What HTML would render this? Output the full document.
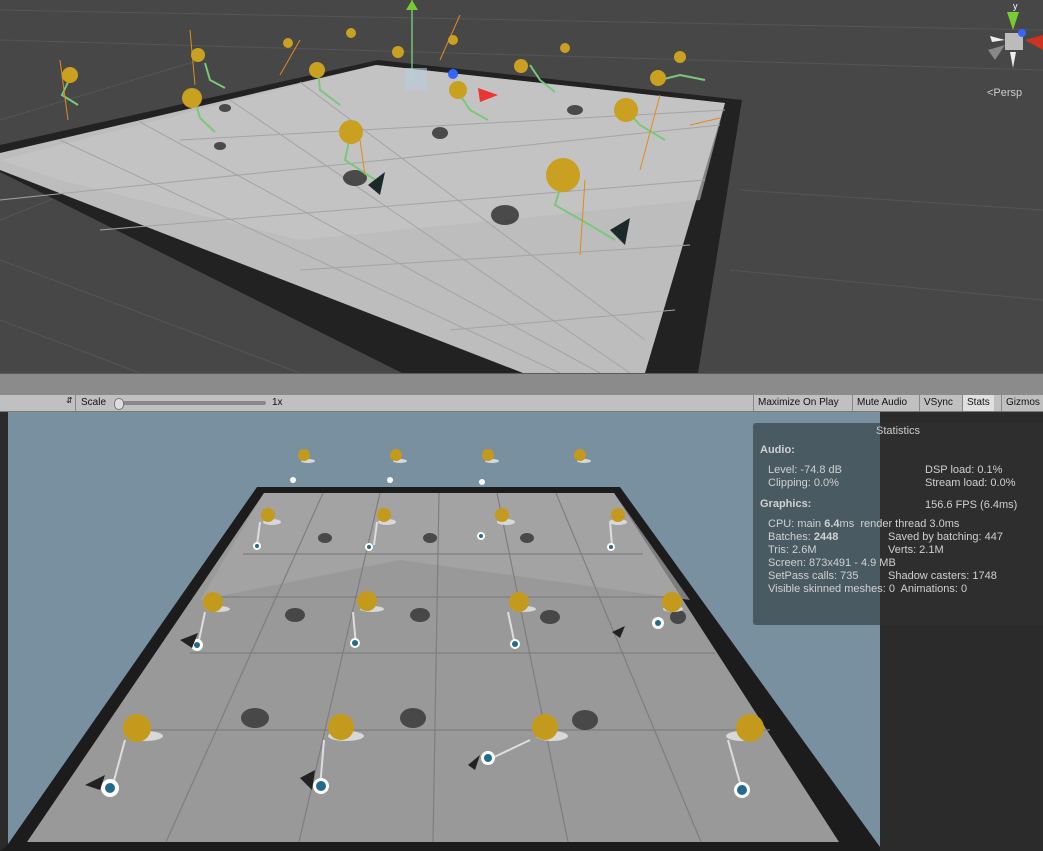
<!DOCTYPE html>
<html><head><meta charset="utf-8"><style>
html,body{margin:0;padding:0;width:1043px;height:851px;overflow:hidden;background:#474747;font-family:"Liberation Sans",sans-serif}
.abs{position:absolute}
#bar1{left:0;top:373px;width:1043px;height:22px;background:#8b8b8b;border-top:1px solid #5a5a5a}
#bar2{left:0;top:395px;width:1043px;height:16px;background:#c0c0c0;border-bottom:1px solid #7a7a7a;font-size:10px;color:#111}
.btn{position:absolute;top:0;height:16px;line-height:16px;border-left:1px solid #888;padding:0 4px;font-size:10px}
#stats{left:753px;top:423px;width:290px;height:202px;font-size:11px;color:#d0d0d0}
#stats div{position:absolute;white-space:nowrap}
</style></head><body>
<svg class="abs" style="left:0;top:0" width="1043" height="851">
<rect x="0" y="0" width="1043" height="373" fill="#474747"/>
<g stroke="#555" stroke-width="1">
<line x1="0" y1="40" x2="1043" y2="70"/><line x1="0" y1="10" x2="1043" y2="30"/>
<line x1="0" y1="260" x2="300" y2="373"/><line x1="0" y1="320" x2="140" y2="373"/>
<line x1="740" y1="190" x2="1043" y2="210"/><line x1="730" y1="270" x2="1043" y2="300"/>
<line x1="0" y1="220" x2="150" y2="160"/><line x1="0" y1="120" x2="200" y2="60"/>
</g>
<polygon points="0,145 378,60 742,100 698,373 402,373 0,172" fill="#222"/>
<polygon points="0,153 376,65 725,103 645,373 523,373 0,170" fill="#bdbdbd"/>
<polygon points="376,65 725,103 700,200 300,240 60,180 0,160" fill="#c6c6c6" opacity=".6"/>
<g stroke="#a4a4a4" stroke-width="1">
<line x1="60" y1="140" x2="560" y2="373"/><line x1="140" y1="122" x2="600" y2="373"/>
<line x1="230" y1="100" x2="630" y2="373"/><line x1="300" y1="82" x2="645" y2="340"/>
<line x1="0" y1="200" x2="720" y2="125"/><line x1="100" y1="230" x2="705" y2="180"/>
<line x1="300" y1="270" x2="690" y2="245"/><line x1="450" y1="330" x2="675" y2="310"/>
<line x1="180" y1="140" x2="725" y2="110"/>
</g>
<g fill="#222" opacity=".75">
<ellipse cx="355" cy="178" rx="12" ry="8"/><ellipse cx="505" cy="215" rx="14" ry="10"/>
<ellipse cx="440" cy="133" rx="8" ry="6"/><ellipse cx="225" cy="108" rx="6" ry="4"/>
<ellipse cx="575" cy="110" rx="8" ry="5"/><ellipse cx="220" cy="146" rx="6" ry="4"/>
</g>
<g stroke="#7ac87a" stroke-width="2" fill="none">
<polyline points="70,78 62,95 78,105"/><polyline points="195,100 200,118 215,132"/>
<polyline points="350,137 345,160 380,183"/><polyline points="563,178 555,205 590,225 615,240"/>
<polyline points="458,92 470,110 488,120"/><polyline points="628,112 640,125 665,140"/>
<polyline points="660,80 680,75 705,80"/><polyline points="205,63 210,80 225,88"/>
<polyline points="318,72 320,90 340,105"/><polyline points="530,65 540,80 555,92"/>
</g>
<g stroke="#e08a20" stroke-width="1">
<line x1="60" y1="60" x2="68" y2="120"/><line x1="190" y1="30" x2="195" y2="85"/>
<line x1="460" y1="15" x2="440" y2="60"/><line x1="580" y1="255" x2="585" y2="180"/>
<line x1="640" y1="170" x2="660" y2="95"/><line x1="360" y1="140" x2="365" y2="175"/>
<line x1="280" y1="75" x2="300" y2="40"/><line x1="690" y1="125" x2="720" y2="118"/>
</g>
<line x1="412" y1="0" x2="412" y2="80" stroke="#8f8" stroke-width="1"/>
<polygon points="406,10 418,10 412,0" fill="#7c3"/>
<rect x="405" y="68" width="22" height="22" fill="#bcd" opacity=".6"/>
<polygon points="478,88 498,95 480,102" fill="#e33"/>
<circle cx="453" cy="74" r="5" fill="#36f"/>
<g>
<circle cx="70" cy="75" r="8" fill="#c9a020"/><circle cx="198" cy="55" r="7" fill="#c9a020"/>
<circle cx="192" cy="98" r="10" fill="#c9a020"/><circle cx="288" cy="43" r="5" fill="#c9a020"/>
<circle cx="317" cy="70" r="8" fill="#c9a020"/><circle cx="351" cy="33" r="5" fill="#c9a020"/>
<circle cx="398" cy="52" r="6" fill="#c9a020"/><circle cx="453" cy="40" r="5" fill="#c9a020"/>
<circle cx="458" cy="90" r="9" fill="#c9a020"/><circle cx="521" cy="66" r="7" fill="#c9a020"/>
<circle cx="565" cy="48" r="5" fill="#c9a020"/><circle cx="658" cy="78" r="8" fill="#c9a020"/>
<circle cx="680" cy="57" r="6" fill="#c9a020"/><circle cx="626" cy="110" r="12" fill="#c9a020"/>
<circle cx="351" cy="132" r="12" fill="#c9a020"/><circle cx="563" cy="175" r="17" fill="#c9a020"/>
</g>
<polygon points="610,230 630,218 625,245" fill="#1a2a2a"/><polygon points="368,185 385,172 380,195" fill="#1a2a2a"/>
<!-- gizmo -->
<polygon points="1007,12 1019,12 1013,30" fill="#7c3"/>
<rect x="1005" y="33" width="18" height="17" fill="#bbb"/>
<circle cx="1022" cy="33" r="4" fill="#36f"/>
<polygon points="1025,40 1043,35 1043,50" fill="#c32"/>
<polygon points="990,36 1005,40 992,42" fill="#eee"/>
<polygon points="988,50 1005,45 995,60" fill="#888"/>
<polygon points="1010,52 1016,52 1013,68" fill="#eee"/>
<text x="1013" y="9" fill="#fff" font-size="9" font-family="Liberation Sans">y</text>
<text x="987" y="96" fill="#ccc" font-size="11" font-family="Liberation Sans">&lt;Persp</text>

<!-- game view -->
<rect x="0" y="411" width="8" height="440" fill="#2b2b2b"/>
<rect x="8" y="411" width="872" height="440" fill="#7890a0"/>
<rect x="880" y="411" width="163" height="440" fill="#2b2b2b"/>
<polygon points="257,487 620,487 880,847 880,851 0,851 6,847" fill="#1c1c1c"/>
<polygon points="264,493 614,493 839,842 27,842" fill="#999"/>
<polygon points="264,493 614,493 690,600 400,560 200,600" fill="#a6a6a6" opacity=".7"/>
<g stroke="#7e7e7e" stroke-width="1.2">
<line x1="323" y1="493" x2="166" y2="842"/><line x1="380" y1="493" x2="299" y2="842"/>
<line x1="439" y1="493" x2="433" y2="842"/><line x1="497" y1="493" x2="568" y2="842"/>
<line x1="556" y1="493" x2="701" y2="842"/>
<line x1="243" y1="554" x2="643" y2="554"/><line x1="220" y1="597" x2="674" y2="597"/>
<line x1="190" y1="653" x2="715" y2="653"/><line x1="140" y1="730" x2="770" y2="730"/>
</g>
<g fill="#333" opacity=".8">
<ellipse cx="325" cy="538" rx="7" ry="5"/><ellipse cx="430" cy="538" rx="7" ry="5"/><ellipse cx="527" cy="538" rx="7" ry="5"/>
<ellipse cx="295" cy="615" rx="10" ry="7"/><ellipse cx="420" cy="615" rx="10" ry="7"/><ellipse cx="550" cy="617" rx="10" ry="7"/><ellipse cx="678" cy="617" rx="8" ry="7"/>
<ellipse cx="255" cy="718" rx="14" ry="10"/><ellipse cx="413" cy="718" rx="13" ry="10"/><ellipse cx="585" cy="720" rx="13" ry="10"/>
</g>
<g stroke="#ddd" stroke-width="2" fill="none">
<line x1="260" y1="522" x2="257" y2="545"/><line x1="377" y1="522" x2="374" y2="545"/><line x1="610" y1="522" x2="612" y2="545"/>
<line x1="205" y1="612" x2="198" y2="645"/><line x1="353" y1="612" x2="356" y2="645"/><line x1="508" y1="612" x2="515" y2="645"/>
<line x1="125" y1="740" x2="112" y2="788"/><line x1="324" y1="740" x2="320" y2="788"/><line x1="530" y1="740" x2="488" y2="760"/><line x1="728" y1="740" x2="742" y2="790"/>
</g>
<g fill="#fff"><circle cx="257" cy="546" r="4"/><circle cx="369" cy="547" r="4"/><circle cx="481" cy="536" r="4"/><circle cx="611" cy="547" r="4"/>
<circle cx="197" cy="645" r="6"/><circle cx="355" cy="643" r="5"/><circle cx="515" cy="644" r="5"/><circle cx="658" cy="623" r="6"/>
<circle cx="110" cy="788" r="9"/><circle cx="321" cy="786" r="8"/><circle cx="488" cy="758" r="7"/><circle cx="742" cy="790" r="8"/>
<circle cx="293" cy="480" r="3"/><circle cx="390" cy="480" r="3"/><circle cx="482" cy="482" r="3"/></g>
<g fill="#226b8a"><circle cx="257" cy="546" r="2"/><circle cx="369" cy="547" r="2"/><circle cx="481" cy="536" r="2"/><circle cx="611" cy="547" r="2"/>
<circle cx="197" cy="645" r="3"/><circle cx="355" cy="643" r="3"/><circle cx="515" cy="644" r="3"/><circle cx="658" cy="623" r="3"/>
<circle cx="110" cy="788" r="5"/><circle cx="321" cy="786" r="5"/><circle cx="488" cy="758" r="4"/><circle cx="742" cy="790" r="5"/></g>
<g fill="#d8d8d8"><ellipse cx="308" cy="461" rx="7" ry="2"/><ellipse cx="400" cy="461" rx="7" ry="2"/><ellipse cx="492" cy="461" rx="7" ry="2"/><ellipse cx="584" cy="461" rx="7" ry="2"/>
<ellipse cx="272" cy="522" rx="9" ry="3"/><ellipse cx="387" cy="522" rx="9" ry="3"/><ellipse cx="506" cy="522" rx="9" ry="3"/><ellipse cx="618" cy="522" rx="9" ry="3"/>
<ellipse cx="218" cy="609" rx="12" ry="3"/><ellipse cx="372" cy="609" rx="12" ry="3"/><ellipse cx="524" cy="609" rx="12" ry="3"/><ellipse cx="673" cy="609" rx="10" ry="3"/>
<ellipse cx="145" cy="736" rx="18" ry="5"/><ellipse cx="346" cy="736" rx="18" ry="5"/><ellipse cx="552" cy="736" rx="16" ry="5"/><ellipse cx="742" cy="736" rx="16" ry="5"/></g>
<g fill="#c49a1c">
<circle cx="304" cy="455" r="6"/><circle cx="396" cy="455" r="6"/><circle cx="488" cy="455" r="6"/><circle cx="580" cy="455" r="6"/>
<circle cx="268" cy="515" r="7"/><circle cx="384" cy="515" r="7"/><circle cx="502" cy="515" r="7"/><circle cx="618" cy="515" r="7"/>
<circle cx="213" cy="602" r="10"/><circle cx="367" cy="601" r="10"/><circle cx="519" cy="602" r="10"/><circle cx="672" cy="602" r="10"/>
<circle cx="137" cy="728" r="14"/><circle cx="341" cy="727" r="13"/><circle cx="545" cy="727" r="13"/><circle cx="750" cy="728" r="14"/>
</g>
<g fill="#222"><polygon points="85,785 105,775 100,790"/><polygon points="300,778 315,770 312,790"/><polygon points="468,765 480,755 475,770"/><polygon points="180,640 198,633 192,648"/><polygon points="612,632 625,626 620,638"/></g>
</svg>
<div id="bar1" class="abs"></div>
<div id="bar2" class="abs">
<span class="abs" style="left:66px;top:1px;font-size:8px">&#8693;</span>
<div class="abs" style="left:75px;top:0;width:1px;height:16px;background:#888"></div>
<span class="abs" style="left:81px;top:2px">Scale</span>
<div class="abs" style="left:118px;top:6px;width:148px;height:4px;background:#888;border-radius:2px"></div>
<div class="abs" style="left:114px;top:3px;width:8px;height:10px;background:#ddd;border:1px solid #777;border-radius:5px"></div>
<span class="abs" style="left:272px;top:2px">1x</span>
<div class="btn" style="left:753px">Maximize On Play</div>
<div class="btn" style="left:852px">Mute Audio</div>
<div class="btn" style="left:919px">VSync</div>
<div class="btn" style="left:962px;background:#e0e0e0">Stats</div>
<div class="btn" style="left:1001px">Gizmos</div>
</div>
<div class="abs" style="left:753px;top:423px;width:127px;height:202px;background:#4a5a63;border-radius:3px 0 0 3px"></div>
<div class="abs" style="left:880px;top:423px;width:163px;height:202px;background:#2e2e2e"></div>
<div id="stats" class="abs">
<div style="left:123px;top:2px;color:#ccc">Statistics</div>
<div style="left:7px;top:21px;font-weight:bold">Audio:</div>
<div style="left:15px;top:41px">Level: -74.8 dB</div><div style="left:172px;top:41px">DSP load: 0.1%</div>
<div style="left:15px;top:54px">Clipping: 0.0%</div><div style="left:172px;top:54px">Stream load: 0.0%</div>
<div style="left:7px;top:75px;font-weight:bold">Graphics:</div><div style="left:172px;top:76px">156.6 FPS (6.4ms)</div>
<div style="left:15px;top:95px">CPU: main <b>6.4</b>ms&nbsp; render thread 3.0ms</div>
<div style="left:15px;top:108px">Batches: <b>2448</b></div><div style="left:135px;top:108px">Saved by batching: 447</div>
<div style="left:15px;top:121px">Tris: 2.6M</div><div style="left:135px;top:121px">Verts: 2.1M</div>
<div style="left:15px;top:134px">Screen: 873x491 - 4.9 MB</div>
<div style="left:15px;top:147px">SetPass calls: 735</div><div style="left:135px;top:147px">Shadow casters: 1748</div>
<div style="left:15px;top:160px">Visible skinned meshes: 0&nbsp; Animations: 0</div>
</div>
</body></html>
